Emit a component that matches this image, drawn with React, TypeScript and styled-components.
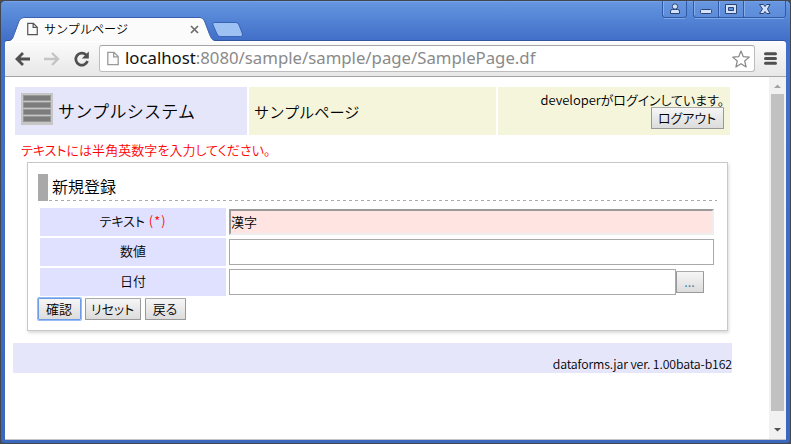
import React from "react";
import styled, { createGlobalStyle } from "styled-components";

const GlobalStyle = createGlobalStyle`
  * { box-sizing: border-box; }
  html, body { margin: 0; padding: 0; overflow: hidden; background: #4a4c50; }
`;

const jp = `"Noto Sans CJK JP", sans-serif`;

const Window = styled.div`
  width: 791px;
  height: 444px;
  display: flex;
  flex-direction: column;
  padding: 0 4px 3px 4px;
  border: 1px solid #42464e;
  border-radius: 5px 5px 4px 4px;
  background: linear-gradient(#6898e2 0, #5d8edb 8px, #426fc9 39px, #3b68bd 100%);
  box-shadow: inset 0 1px #75a2e8;
  font-family: ${jp};
  font-weight: 350;
  color: #000;
`;

const TitleBar = styled.header`
  height: 40px;
  flex: none;
  display: flex;
  align-items: flex-start;
`;

const Tab = styled.div`
  position: relative;
  z-index: 1;
  width: 208px;
  height: 25px;
  margin: 15px 0 0 4px;
  display: flex;
  align-items: center;
  padding: 0 18px 0 18px;
`;

const TabShape = styled.svg`
  position: absolute;
  left: 0;
  top: 0;
`;

const TabIcon = styled.svg`
  position: relative;
  flex: none;
  margin-top: 1px;
`;

const TabTitle = styled.span`
  position: relative;
  flex: 1;
  margin-left: 6px;
  font-size: 12.1px;
  line-height: 20px;
  white-space: nowrap;
`;

const NewTab = styled.svg`
  margin: 20px 0 0 -6px;
  flex: none;
`;

const Controls = styled.svg`
  margin-left: auto;
  flex: none;
`;

const Toolbar = styled.nav`
  height: 35px;
  flex: none;
  display: flex;
  align-items: center;
  padding: 0 9px 1px 10px;
  background: linear-gradient(#fbfbfb, #e7e7e7);
  border-top: 1px solid #fff;
  border-radius: 2px 3px 0 0;
  box-shadow: 0 -1px #3155a0;
`;

const NavIcons = styled.svg`
  flex: none;
`;

const Address = styled.div`
  flex: 1;
  height: 27px;
  margin: 0 9px 0 6px;
  display: flex;
  align-items: center;
  padding: 0 4px 0 7px;
  background: #fff;
  border: 1px solid #bdbdbd;
  border-top-color: #a5a5a5;
  border-radius: 3px;
`;

const Url = styled.span`
  flex: 1;
  margin-left: 6px;
  font: 16.75px/22px "Noto Sans", sans-serif;
  padding-bottom: 2px;
  color: #8a8a8a;
  white-space: nowrap;
  b { font-weight: 400; color: #111; }
`;

const Viewport = styled.div`
  flex: 1;
  display: flex;
  min-height: 0;
  background: #fff;
  border-top: 1px solid #a6a6a6;
  border-bottom: 1px solid #c6c6c6;
`;

const Page = styled.main`
  flex: 1;
  padding: 10px 37px 0 8px;
`;

const HeaderGrid = styled.div`
  display: grid;
  grid-template-columns: 232px 247px 232px;
  gap: 2px;
  height: 48px;
  margin-left: 2px;
`;

const HeaderCell = styled.div<{ $tone: string; $inset: number }>`
  display: flex;
  align-items: center;
  padding-left: ${(p) => p.$inset}px;
  padding-bottom: 1px;
  background: ${(p) => p.$tone};
`;

const Heading = styled.span<{ $size: number; $spacing?: number }>`
  font-size: ${(p) => p.$size}px;
  line-height: 24px;
  letter-spacing: ${(p) => p.$spacing ?? 0}px;
  white-space: nowrap;
`;

const Logo = styled.svg`
  margin: -3px 5px 0 0;
  flex: none;
`;

const Account = styled.div`
  display: flex;
  flex-direction: column;
  align-items: flex-end;
  padding: 5px 6px 0 0;
  background: #f5f5dc;
`;

const AccountText = styled.span`
  height: 15px;
  font-size: 13px;
  line-height: 15px;
  font-feature-settings: "palt";
  white-space: nowrap;
  letter-spacing: -0.05px;
`;

const ErrorText = styled.div`
  height: 27px;
  padding: 5px 0 0 8px;
  font-size: 13px;
  line-height: 19px;
  color: #f00;
  font-feature-settings: "palt";
  letter-spacing: 0.05px;
  white-space: nowrap;
`;

const Panel = styled.section`
  width: 701px;
  height: 169px;
  margin-left: 14px;
  padding: 11px 10px 0 10px;
  border: 1px solid #c8c8c8;
  box-shadow: 1px 2px 3px rgba(0, 0, 0, 0.15);
`;

const PanelTitle = styled.div`
  display: flex;
  height: 27px;
`;

const TitleMark = styled.i`
  width: 10px;
  background: #a9a9a9;
`;

const TitleText = styled.div`
  flex: 1;
  padding-left: 4px;
  font-size: 16px;
  line-height: 25px;
  background: repeating-linear-gradient(90deg, transparent 0 1px, #a9a9a9 1px 4px, transparent 4px 6px) 0 100% / 100% 1px no-repeat;
`;

const Fields = styled.div`
  display: grid;
  grid-template-columns: 186px 1fr;
  grid-auto-rows: 28px;
  gap: 2px 3px;
  margin: 7px 3px 0 2px;
`;

const Label = styled.label`
  display: flex;
  justify-content: center;
  background: #e0e0ff;
  font-size: 13px;
  line-height: 26px;
  font-feature-settings: "palt";
`;

const Required = styled.span`
  margin-left: 4px;
  color: #f00;
  letter-spacing: 1px;
`;

const FieldCell = styled.div`
  display: flex;
  align-items: center;
`;

const Input = styled.input<{ $invalid?: boolean; $width: number }>`
  width: ${(p) => p.$width}px;
  height: 26px;
  padding: 0 0 2px;
  border: ${(p) => (p.$invalid ? "2px solid" : "1px solid #a9a9a9")};
  ${(p) => p.$invalid && "border-color: #9a9a9a #eee #eee #9a9a9a;"}
  border-radius: 0;
  outline: 0;
  background: ${(p) => (p.$invalid ? "#ffe4e1" : "#fff")};
  font: 350 13px/20px ${jp};
  color: #000;
`;

const Button = styled.button<{ $width: number; $focused?: boolean; $accent?: boolean }>`
  width: ${(p) => p.$width}px;
  height: 22px;
  flex: none;
  padding: 0 1px 0 0;
  border: 1px solid ${(p) => (p.$focused ? "#6d9be6" : "#999")};
  ${(p) => !p.$focused && "border-top-color: #aaa;"}
  border-radius: 1px;
  box-shadow: ${(p) => (p.$focused ? "0 0 0 1px #9abcf5" : "none")};
  background: linear-gradient(#f6f6f6, #dcdcdc);
  color: ${(p) => (p.$accent ? "#3a7ca5" : "#000")};
  font: 350 13px/18px ${jp};
  font-feature-settings: "palt";
  white-space: nowrap;
`;

const Actions = styled.div`
  display: flex;
  gap: 4px;
  margin-top: 2px;
`;

const Footer = styled.footer`
  width: 719px;
  height: 30px;
  margin-top: 12px;
  padding-top: 12px;
  text-align: right;
  background: #e6e6fa;
  font-size: 12.3px;
  line-height: 19px;
  letter-spacing: -0.12px;
  white-space: nowrap;
`;

const Scrollbar = styled.div`
  width: 17px;
  display: flex;
  flex-direction: column;
  align-items: center;
  background: #f1f1f1;
`;

const Thumb = styled.div`
  width: 13px;
  height: 317px;
  background: #c1c1c1;
`;

const PageGlyph = ({ stroke }: { stroke: string }) => (
  <path d="M.8 .8H7L11.2 5V13.2H.8ZM6.7 .8V5.3H11.2" fill="#fbfbfb" stroke={stroke} strokeWidth="1.3" />
);

export default function App() {
  return (
    <>
      <GlobalStyle />
      <Window>
        <TitleBar>
          <Tab>
            <TabShape width="208" height="25" viewBox="0 0 208 25">
              <path
                d="M0 25C4 24 4 21 6 16L10 5Q11.500 1.500 15 1.500H191Q194 1.500 195.500 5L200 17C202 22 203 24 206 25Z"
                fill="#fbfbfb"
              />
              <path
                d="M0 24.500C4 24 4 21 6 16L10 5Q11.500 1.500 15 1.500H191Q194 1.500 195.500 5L200 17C202 22 203 24 206 24.500"
                fill="none"
                stroke="#3b62ae"
              />
            </TabShape>
            <TabIcon width="11" height="14" viewBox="0 0 12 14">
              <PageGlyph stroke="#555" />
            </TabIcon>
            <TabTitle>サンプルページ</TabTitle>
            <TabIcon width="9" height="9" viewBox="0 0 9 9">
              <path d="M1 1L8 8M8 1L1 8" stroke="#6c6c6c" strokeWidth="1.7" />
            </TabIcon>
          </Tab>
          <NewTab width="34" height="17" viewBox="0 0 34 17">
            <path d="M3 1.500H25Q27 1.500 28 4L31.500 13Q32 15.500 29.500 15.500H9Q7 15.500 6 13L2 4Q1 1.500 3 1.500Z" fill="#9dc1f2" stroke="#3964b5" />
          </NewTab>
          <Controls width="126" height="20" viewBox="-1 0 126 20">
            <g fill="#6997df" fillOpacity=".35" stroke="#2f58a5">
              <path d="M1.500 0V14Q1.500 16.500 4 16.500H22Q25.500 16.500 25.500 14V0" />
              <path d="M32.500 0V14Q32.500 16.500 35 16.500H122Q124.500 16.500 124.500 14V0M57.500 0V16M82.500 0V16" />
            </g>
            <path d="M3 17.500H24M34 17.500H123" stroke="#7fa8ea" fill="none" />
            <path d="M2.500 0V14M33.500 0V14M58.500 0V15M83.500 0V15" stroke="#88aeea" fill="none" />
            <g fill="#d3e1fa" stroke="#2c4473" transform="translate(1 0)">
              <path d="M8.500 12.500V10Q8.500 8.500 10.500 8.500H15.500Q17.500 8.500 17.500 10V12.500Z" />
              <circle cx="13" cy="5.500" r="2.700" />
              <rect x="38.500" y="8.500" width="11" height="4" rx="1" />
              <path fillRule="evenodd" d="M63.500 3.500H74.500V12.500H63.500ZM66.500 6.500V9.500H71.500V6.500Z" />
              <path d="M97.500 3.500H101.500L103 5.500L104.500 3.500H108L105.500 8L108 12.500H104.500L103 10.500L101.500 12.500H97.500L100.500 8Z" />
            </g>
          </Controls>
        </TitleBar>
        <Toolbar>
          <NavIcons width="78" height="20" viewBox="0 0 78 20" fill="none">
            <path d="M15 10H2M8 4L2 10L8 16" stroke="#505050" strokeWidth="2.800" />
            <path d="M29 10H43M37 4L43 10L37 16" stroke="#c4c4c4" strokeWidth="2.400" />
            <path d="M71 5.800A6 6 0 1 0 72.500 12" stroke="#505050" strokeWidth="2.700" />
            <path d="M73.800 2.500V9.500H66.800Z" fill="#505050" />
          </NavIcons>
          <Address>
            <svg width="12" height="15" viewBox="0 0 12 14">
              <PageGlyph stroke="#999" />
            </svg>
            <Url>
              <b>localhost</b>:8080/sample/sample/page/SamplePage.df
            </Url>
            <svg width="18" height="18" viewBox="0 0 18 18">
              <path d="M9 1L11.300 6.700L17.300 7.100L12.700 11L14.100 17L9 13.700L3.900 17L5.300 11L.7 7.100L6.700 6.700Z" fill="#fff" stroke="#888" strokeWidth="1.200" strokeLinejoin="round" />
            </svg>
          </Address>
          <svg width="13" height="13" viewBox="0 0 13 13">
            <path d="M1.500 1.700H11.500M1.500 6.500H11.500M1.500 11.300H11.500" stroke="#505050" strokeWidth="3" strokeLinecap="round" />
          </svg>
        </Toolbar>
        <Viewport>
          <Page>
            <HeaderGrid>
              <HeaderCell $tone="#e6e6fa" $inset={6}>
                <Logo width="32" height="32" viewBox="0 0 32 32">
                  <path fill="#c6c6c6" d="M0 0H32V32H0Z" />
                  <path fill="#989898" d="M2 2H30V8H2ZM2 9H30V15H2ZM2 16H30V22H2ZM2 23H30V29H2Z" />
                  <path fill="#7c7c7c" d="M3 3H29V7H3ZM3 10H29V14H3ZM3 17H29V21H3ZM3 24H29V28H3Z" />
                </Logo>
                <Heading $size={17} $spacing={0.3}>サンプルシステム</Heading>
              </HeaderCell>
              <HeaderCell $tone="#f5f5dc" $inset={5}>
                <Heading $size={15.2}>サンプルページ</Heading>
              </HeaderCell>
              <Account>
                <AccountText>developerがログインしています。</AccountText>
                <Button $width={73}>ログアウト</Button>
              </Account>
            </HeaderGrid>
            <ErrorText>テキストには半角英数字を入力してください。</ErrorText>
            <Panel>
              <PanelTitle>
                <TitleMark />
                <TitleText>新規登録</TitleText>
              </PanelTitle>
              <Fields>
                <Label>
                  テキスト<Required>(*)</Required>
                </Label>
                <FieldCell>
                  <Input $width={485} $invalid defaultValue="漢字" />
                </FieldCell>
                <Label>数値</Label>
                <FieldCell>
                  <Input $width={485} />
                </FieldCell>
                <Label>日付</Label>
                <FieldCell>
                  <Input $width={447} />
                  <Button $width={28} $accent>...</Button>
                </FieldCell>
              </Fields>
              <Actions>
                <Button $width={43} $focused>確認</Button>
                <Button $width={56}>リセット</Button>
                <Button $width={41}>戻る</Button>
              </Actions>
            </Panel>
            <Footer>dataforms.jar ver. 1.00bata-b162</Footer>
          </Page>
          <Scrollbar>
            <svg width="17" height="17" viewBox="0 0 17 17">
              <path d="M5 11L8.500 7.500L12 11Z" fill="#a3a3a3" />
            </svg>
            <Thumb />
            <svg width="17" height="28" viewBox="0 0 17 28">
              <path d="M5 17L8.500 20.500L12 17Z" fill="#505050" />
            </svg>
          </Scrollbar>
        </Viewport>
      </Window>
    </>
  );
}
